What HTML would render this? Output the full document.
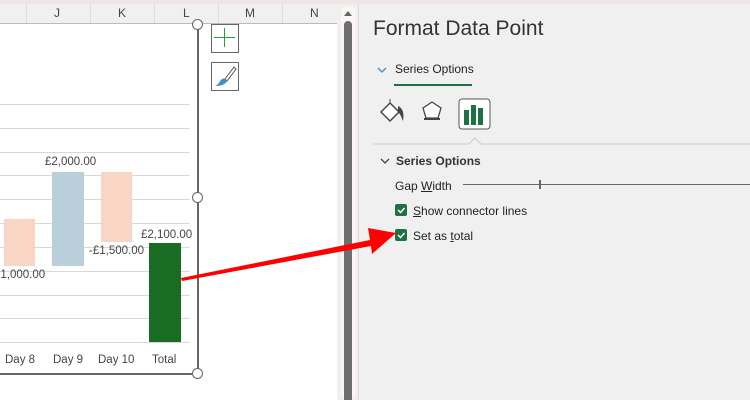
<!DOCTYPE html>
<html><head><style>
body{margin:0;width:750px;height:400px;overflow:hidden;position:relative;background:#f0f0f0;font-family:"Liberation Sans",sans-serif}
.a{position:absolute}
.t{position:absolute;font-size:11.5px;color:#444;white-space:nowrap}
.g{position:absolute;left:0;width:190px;height:1px;background:#d9d9d9}
.h{position:absolute;width:9px;height:9px;border:1.5px solid #666;border-radius:50%;background:#fff}
.cb{position:absolute;width:12px;height:12px;background:#1e7145;border-radius:2px}
</style></head><body>
<div class="a" style="left:0;top:0;width:750px;height:4px;background:#efe6e6"></div>
<div class="a" style="left:0;top:4px;width:337px;height:19px;background:#f0f0f0;border-bottom:1px solid #bbb"></div>
<div class="a" style="left:26px;top:4px;width:1px;height:19px;background:#ddd"></div>
<div class="a" style="left:90px;top:4px;width:1px;height:19px;background:#ddd"></div>
<div class="a" style="left:154px;top:4px;width:1px;height:19px;background:#ddd"></div>
<div class="a" style="left:218px;top:4px;width:1px;height:19px;background:#ddd"></div>
<div class="a" style="left:282px;top:4px;width:1px;height:19px;background:#ddd"></div>
<div class="t" style="left:54px;top:6px;font-size:12px">J</div>
<div class="t" style="left:118px;top:6px;font-size:12px">K</div>
<div class="t" style="left:183px;top:6px;font-size:12px">L</div>
<div class="t" style="left:245px;top:6px;font-size:12px">M</div>
<div class="t" style="left:310px;top:6px;font-size:12px">N</div>
<div class="a" style="left:0;top:24px;width:337px;height:376px;background:#fff"></div>
<div class="g" style="top:104px"></div><div class="g" style="top:128px"></div><div class="g" style="top:152px"></div><div class="g" style="top:175px"></div><div class="g" style="top:199px"></div><div class="g" style="top:223px"></div><div class="g" style="top:247px"></div><div class="g" style="top:271px"></div><div class="g" style="top:295px"></div><div class="g" style="top:318px"></div><div class="g" style="top:342px"></div>
<div class="a" style="left:4px;top:219px;width:31px;height:47px;background:#f8d5c4"></div>
<div class="a" style="left:52px;top:172px;width:32px;height:94px;background:#b9cfd9"></div>
<div class="a" style="left:101px;top:172px;width:31px;height:70px;background:#f8d5c4"></div>
<div class="a" style="left:149px;top:243px;width:32px;height:99px;background:#1a6b24"></div>
<div class="t" style="left:45px;top:156px">£2,000.00</div>
<div class="t" style="left:-6px;top:269px">£1,000.00</div>
<div class="t" style="left:89px;top:245px">-£1,500.00</div>
<div class="t" style="left:141px;top:229px">£2,100.00</div>
<div class="t" style="left:5px;top:354px">Day 8</div>
<div class="t" style="left:53px;top:354px">Day 9</div>
<div class="t" style="left:98px;top:354px">Day 10</div>
<div class="t" style="left:152px;top:354px">Total</div>
<div class="a" style="left:197px;top:24px;width:2px;height:350px;background:#666"></div>
<div class="a" style="left:0;top:373px;width:198px;height:2px;background:#666"></div>
<div class="h" style="left:192px;top:19px"></div>
<div class="h" style="left:192px;top:192px"></div>
<div class="h" style="left:192px;top:368px"></div>
<div class="a" style="left:211px;top:24px;width:26px;height:27px;border:1px solid #666;background:#fff"></div>
<div class="a" style="left:224px;top:28px;width:1px;height:19px;background:#2a9a3a"></div>
<div class="a" style="left:214px;top:37px;width:21px;height:1px;background:#2a9a3a"></div>
<div class="a" style="left:211px;top:62px;width:26px;height:27px;border:1px solid #666;background:#fff"></div>
<svg class="a" style="left:211px;top:62px" width="28" height="28"><path d="M14 17 L23 5 L25 7 L16 19 Z" fill="#fff" stroke="#555"/><path d="M9 19 Q13 14 16 19 Q14 24 4 24 Q8 22 9 19Z" fill="#3d8fd6"/></svg>
<div class="a" style="left:338px;top:4px;width:20px;height:396px;background:#f3eeee"></div>
<div class="a" style="left:341px;top:6px;width:15px;height:394px;background:#faf6f6;border-radius:7px"></div>
<div class="a" style="left:344px;top:21px;width:8px;height:379px;background:#6e6e6e;border-radius:4px 4px 0 0"></div>
<svg class="a" style="left:343px;top:9px" width="10" height="8"><path d="M1 7 L5 2 L9 7Z" fill="#666"/></svg>
<div class="a" style="left:358px;top:4px;width:1px;height:396px;background:#e0dada"></div>
<div class="t" style="left:373px;top:17px;font-size:21px;color:#333">Format Data Point</div>
<svg class="a" style="left:377px;top:66px" width="10" height="8"><path d="M1 2 L5 6 L9 2" fill="none" stroke="#3a8bd0" stroke-width="1.3"/></svg>
<div class="t" style="left:395px;top:62px;font-size:12px;color:#222">Series Options</div>
<div class="a" style="left:394px;top:84px;width:78px;height:2px;background:#1e7145"></div>
<svg class="a" style="left:373px;top:98px" width="377" height="50">
<g transform="translate(5,0)">
<path d="M3 14 L12 5 L21 14 L12 23Z" fill="#fff" stroke="#444" stroke-width="1.5"/><path d="M12 5 V1" stroke="#444"/><path d="M20 8 Q27 11 25 23 Q22 15 20 14Z" fill="#444"/>
<path d="M54 4 L63 10 L60 20 L48 20 L45 10Z" fill="#fff" stroke="#444" stroke-width="1.3"/><path d="M46 21 L62 21" stroke="#444" stroke-width="2"/>
<rect x="81" y="1" width="31" height="30" rx="3" fill="#fff" stroke="#555"/>
<rect x="86" y="12" width="5" height="15" fill="#1e7145"/><rect x="93" y="7" width="5" height="20" fill="#1e7145"/><rect x="100" y="10" width="5" height="17" fill="#1e7145"/>
</g>
<path d="M0 46 L96 46 L102 40 L108 46 L377 46" fill="none" stroke="#ccc"/>
</svg>
<svg class="a" style="left:380px;top:157px" width="10" height="8"><path d="M1 2 L5 6 L9 2" fill="none" stroke="#444" stroke-width="1.3"/></svg>
<div class="t" style="left:396px;top:154px;font-size:12px;font-weight:bold;color:#333">Series Options</div>
<div class="t" style="left:395px;top:179px;font-size:12px;color:#222">Gap <u>W</u>idth</div>
<div class="a" style="left:463px;top:184px;width:287px;height:1px;background:#666"></div>
<div class="a" style="left:539px;top:180px;width:2px;height:9px;background:#666"></div>
<div class="cb" style="left:395px;top:204px"></div>
<svg class="a" style="left:395px;top:204px" width="12" height="12"><path d="M3 6 L5.5 8.5 L9.5 4" fill="none" stroke="#fff" stroke-width="1.5"/></svg>
<div class="t" style="left:413px;top:204px;font-size:12px;color:#222"><u>S</u>how connector lines</div>
<div class="cb" style="left:395px;top:229px"></div>
<svg class="a" style="left:395px;top:229px" width="12" height="12"><path d="M3 6 L5.5 8.5 L9.5 4" fill="none" stroke="#fff" stroke-width="1.5"/></svg>
<div class="t" style="left:413px;top:229px;font-size:12px;color:#222">Set as <u>t</u>otal</div>
<svg class="a" style="left:0;top:0" width="750" height="400"><path d="M181 278 L370 240 L368 228 L396 233 L372 254 L371 246 L182 281Z" fill="#ff0000"/></svg>
</body></html>
